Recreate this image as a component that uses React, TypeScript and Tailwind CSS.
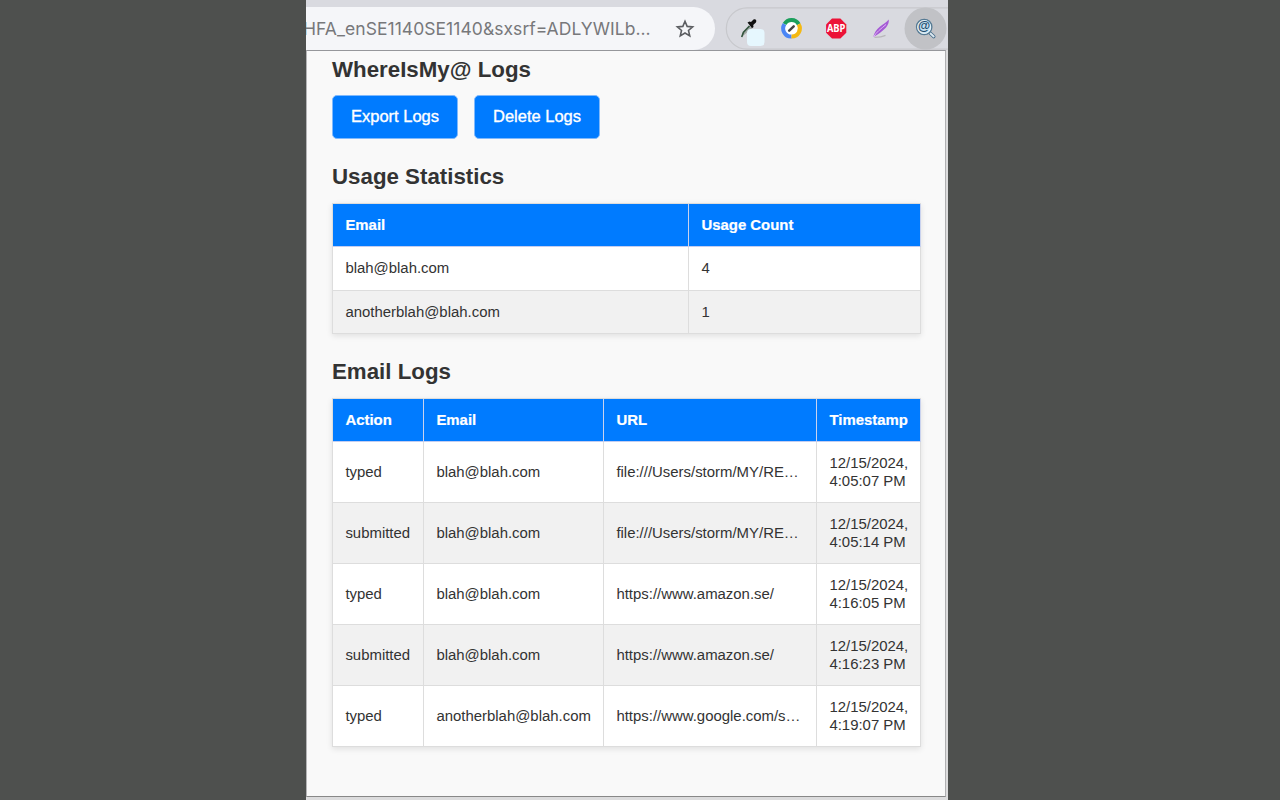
import React from "react";

const usage = [
  ["blah@blah.com", "4"],
  ["anotherblah@blah.com", "1"],
];

const logs = [
  ["typed", "blah@blah.com", "file:///Users/storm/MY/RE…", "12/15/2024,", "4:05:07 PM"],
  ["submitted", "blah@blah.com", "file:///Users/storm/MY/RE…", "12/15/2024,", "4:05:14 PM"],
  ["typed", "blah@blah.com", "https://www.amazon.se/", "12/15/2024,", "4:16:05 PM"],
  ["submitted", "blah@blah.com", "https://www.amazon.se/", "12/15/2024,", "4:16:23 PM"],
  ["typed", "anotherblah@blah.com", "https://www.google.com/s…", "12/15/2024,", "4:19:07 PM"],
];

const tableClass =
  "w-[589px] table-fixed border-separate border-spacing-0 border-l border-t border-[#dddddd] bg-white text-left text-[14.93px] leading-[17.4px] text-[#333333] shadow-[0_2px_6px_rgba(0,0,0,0.1)]";
const thClass =
  "h-[43px] border-b border-r border-b-[#c3cdf0] border-r-[#c9d2ee] bg-[#007bff] px-[12.4px] py-0 font-bold text-white [-webkit-text-stroke:0.2px_white]";
const tdClass = "whitespace-nowrap border-b border-r border-[#dddddd] px-[12.4px] pt-0 align-middle";

function Star() {
  return (
    <svg width="20" height="20" viewBox="0 0 20 20" fill="none" stroke="#5c5e62" strokeWidth="1.6">
      <path d="M10 2.3l2.15 5.1 5.5.48-4.17 3.62 1.25 5.4L10 14.05 5.27 16.9l1.25-5.4L2.35 7.88l5.5-.48z" />
    </svg>
  );
}

function Toolbar() {
  return (
    <div className="flex h-[50px] w-[642px] shrink-0 items-start overflow-hidden bg-[#d9dae0] pt-[7px]">
      <div className="flex h-[43px] w-[409px] shrink-0 items-center overflow-hidden rounded-r-full bg-[#f5f6f9]">
        <div className="-ml-[3px] w-[360px] shrink-0 whitespace-nowrap pt-[2px] font-['Inter',sans-serif] text-[17.5px] tracking-[0.05px] text-[#77787b]">
          HFA_enSE1140SE1140&amp;sxsrf=ADLYWILb...
        </div>
        <div className="ml-[12px]">
          <Star />
        </div>
      </div>
      <svg className="ml-[10px] shrink-0" width="223" height="43" viewBox="725 7 223 43">
        <path d="M950 7.8H747a20.7 20.7 0 0 0 0 41.4h203" fill="none" stroke="#c7c8cc" strokeWidth="1.2" />
        <path d="M749 25.5l3 3-8 6.5-2.5 2.5 1-5z" fill="#a3aba7" />
        <path d="M749.5 26l-6 6.2-1.8 4.8" fill="none" stroke="#34553f" strokeWidth="1.6" />
        <path d="M747.5 22.5l2-1 1.5.5 2.5-2.4c2.2-1 3.6 1 2.4 2.9l-2.7 2.4.3 2-1.5 1.4z" fill="#111" />
        <rect x="747" y="29" width="17.5" height="17" rx="4" fill="#e6f7fe" />
        <circle cx="791.5" cy="28.5" r="8" fill="#fff" />
        <path d="M784.5 24.1a8.1 8.1 0 0 1 14.2.2" fill="none" stroke="#1b9f5c" strokeWidth="4" />
        <path d="M784.5 24.1a8.1 8.1 0 0 0 7 12.5" fill="none" stroke="#4b86f5" strokeWidth="4" />
        <path d="M798.7 24.3a8.1 8.1 0 0 1-7.2 12.3" fill="none" stroke="#f4b912" strokeWidth="4" />
        <path d="M789.2 30.7l4.5-4.3" stroke="#444" strokeWidth="2.5" strokeLinecap="round" />
        <path d="M832 18.5h8.4l5.9 5.9v8.3l-5.9 5.9H832l-5.9-5.9v-8.3z" fill="#ec1237" />
        <text x="836.2" y="32.3" textAnchor="middle" fontFamily="Open Sans, sans-serif" fontSize="10.5" fontWeight="700" textLength="18.5" lengthAdjust="spacingAndGlyphs" fill="#fff">ABP</text>
        <path d="M874.5 37.3c4 0 8-.5 11-1.9" stroke="#b8b7b9" strokeWidth="1.2" fill="none" />
        <path d="M873.3 37c.7-3.8 3-7.5 6.5-10.3 3-2.4 6-4 9-7.2.3 3.2-.8 5.6-3 8.2-3.4 3.7-7.6 6.4-12.5 9.3z" fill="#a55bd5" />
        <path d="M873.5 37c2.6-4.8 7.5-8.2 12.6-12.6" fill="none" stroke="#dfb4f5" strokeWidth="1" />
        <circle cx="925.5" cy="28.5" r="21" fill="#c1c2c6" />
        <path d="M930 33l3.7 3.5" stroke="#456b88" strokeWidth="3.6" strokeLinecap="round" />
        <path d="M930.5 33.4l3.2 3" stroke="#dbe8f0" strokeWidth="2" strokeLinecap="round" />
        <circle cx="924.2" cy="27" r="7.7" fill="#c7dfee" stroke="#567a93" strokeWidth="1.3" />
        <circle cx="924.2" cy="27" r="6.4" fill="none" stroke="#e8f3f9" strokeWidth="1" />
        <text x="924.2" y="30.3" textAnchor="middle" fontFamily="Liberation Sans, sans-serif" fontSize="12.5" fontWeight="700" fill="#214e70">@</text>
      </svg>
    </div>
  );
}

function Heading({ children }: { children: React.ReactNode }) {
  return <h2 className="text-[22.3px] font-bold leading-[26px] text-[#333333]">{children}</h2>;
}

function LogButton({ children }: { children: React.ReactNode }) {
  return (
    <button className="h-[44px] w-[126px] rounded-[5px] border border-[#80b9fc] bg-[#007bff] pb-[2px] text-[16.5px] leading-[20px] text-white [-webkit-text-stroke:0.35px_white]">
      {children}
    </button>
  );
}

export default function App() {
  return (
    <div className="flex h-[800px] w-[1280px] justify-center overflow-hidden bg-[#4e504e] pr-[26px] font-['Liberation_Sans',Arial,sans-serif]">
      <div className="flex h-[800px] w-[642px] flex-col bg-[#dcdcdd]">
        <Toolbar />
        <main className="h-[747px] w-[640px] shrink-0 border border-b-[#888888] border-l-[#b4b4b6] border-r-[#b0b0b2] border-t-[#96979b] bg-[#f9f9f9] pl-[25px] pt-[6px]">
          <Heading>WhereIsMy@ Logs</Heading>
          <div className="mt-[12px] flex gap-[16px]">
            <LogButton>Export Logs</LogButton>
            <LogButton>Delete Logs</LogButton>
          </div>
          <div className="mt-[25px]">
            <Heading>Usage Statistics</Heading>
          </div>
          <table className={`mt-[13px] ${tableClass}`}>
            <colgroup>
              <col className="w-[356px]" />
              <col className="w-[232px]" />
            </colgroup>
            <thead>
              <tr>
                <th className={thClass}>Email</th>
                <th className={thClass}>Usage Count</th>
              </tr>
            </thead>
            <tbody>
              {usage.map(([email, count]) => (
                <tr key={email} className="h-[44px] even:h-[43px] even:bg-[#f1f1f1]">
                  <td className={`pb-px ${tdClass}`}>{email}</td>
                  <td className={`pb-px ${tdClass}`}>{count}</td>
                </tr>
              ))}
            </tbody>
          </table>
          <div className="mt-[25px]">
            <Heading>Email Logs</Heading>
          </div>
          <table className={`mt-[13px] ${tableClass}`}>
            <colgroup>
              <col className="w-[91px]" />
              <col className="w-[180px]" />
              <col className="w-[213px]" />
              <col className="w-[104px]" />
            </colgroup>
            <thead>
              <tr>
                <th className={thClass}>Action</th>
                <th className={thClass}>Email</th>
                <th className={thClass}>URL</th>
                <th className={thClass}>Timestamp</th>
              </tr>
            </thead>
            <tbody>
              {logs.map(([action, email, url, date, time]) => (
                <tr key={time} className="h-[61px] even:bg-[#f1f1f1]">
                  <td className={`pb-0 ${tdClass}`}>{action}</td>
                  <td className={`pb-0 ${tdClass}`}>{email}</td>
                  <td className={`pb-0 ${tdClass}`}>{url}</td>
                  <td className={`pb-px ${tdClass}`}>
                    {date}
                    <br />
                    {time}
                  </td>
                </tr>
              ))}
            </tbody>
          </table>
        </main>
      </div>
    </div>
  );
}
